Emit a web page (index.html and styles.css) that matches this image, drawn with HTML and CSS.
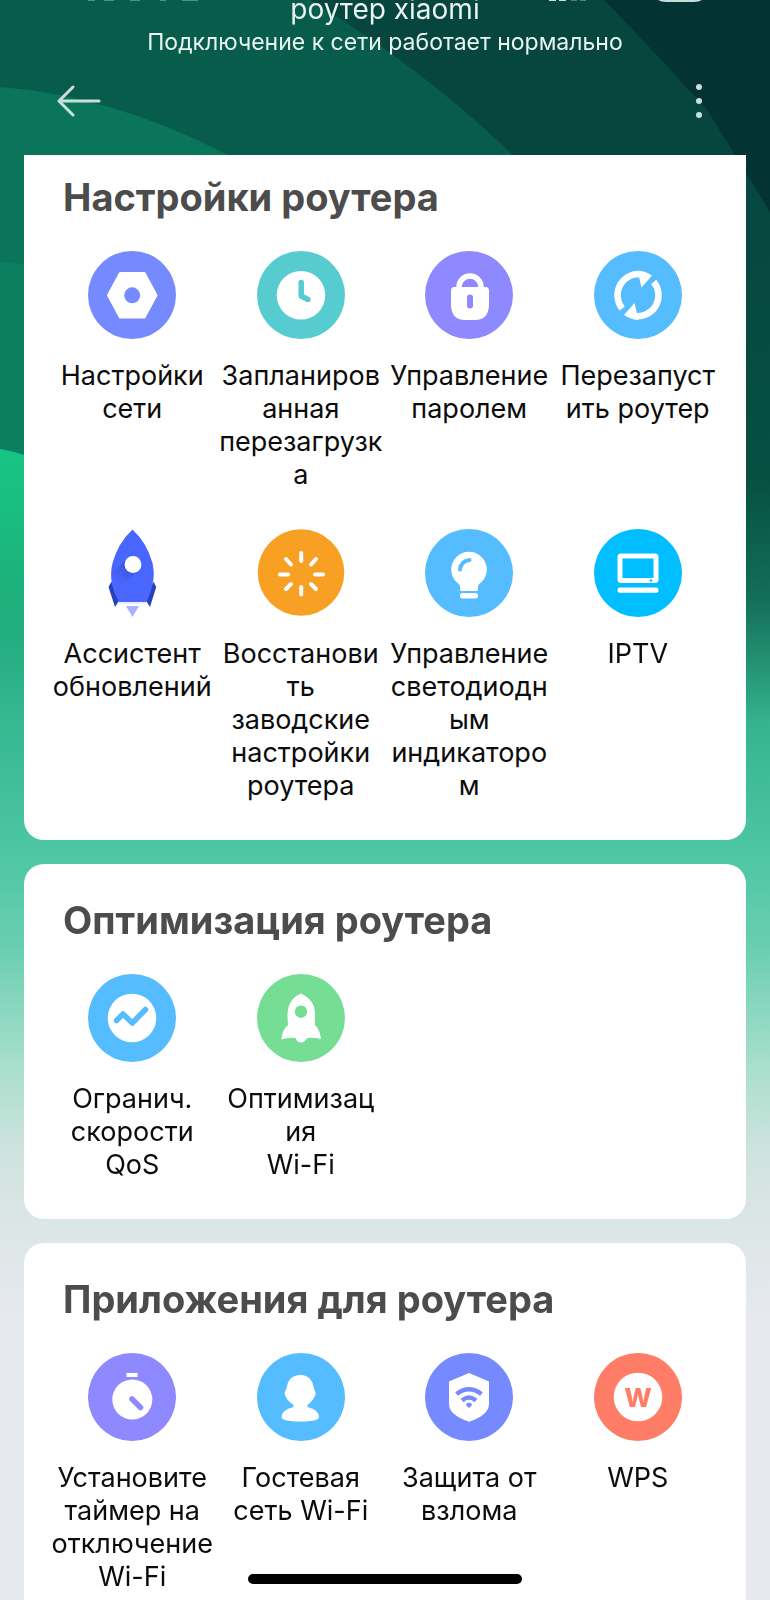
FILE: index.html
```html
<!DOCTYPE html>
<html lang="ru">
<head>
<meta charset="utf-8">
<meta name="viewport" content="width=device-width, initial-scale=1">
<title>роутер xiaomi</title>
<link rel="stylesheet" href="styles.css">
</head>
<body>
<svg class="backdrop" viewBox="0 0 770 1600" preserveAspectRatio="none" aria-hidden="true">
  <defs>
    <linearGradient id="leaf" gradientUnits="userSpaceOnUse" x1="0" y1="450" x2="0" y2="640">
      <stop offset="0" stop-color="#18c383"/><stop offset="0.3" stop-color="#18bf80"/><stop offset="1" stop-color="#12a56f"/>
    </linearGradient>
    <linearGradient id="band" gradientUnits="userSpaceOnUse" x1="0" y1="150" x2="0" y2="500">
      <stop offset="0" stop-color="#06463f"/><stop offset="1" stop-color="#065042"/>
    </linearGradient>
    <linearGradient id="fade" gradientUnits="userSpaceOnUse" x1="0" y1="480" x2="0" y2="1320">
      <stop offset="0" stop-color="#32b48e" stop-opacity="0"/>
      <stop offset="0.14" stop-color="#32b48e" stop-opacity="0.3"/>
      <stop offset="0.29" stop-color="#38b993" stop-opacity="0.95"/>
      <stop offset="0.44" stop-color="#4cc6a3"/>
      <stop offset="0.56" stop-color="#6bcfb1"/>
      <stop offset="0.7" stop-color="#a9dfcd"/>
      <stop offset="0.8" stop-color="#cfe3de"/>
      <stop offset="0.9" stop-color="#dde6e7"/>
      <stop offset="1" stop-color="#e6e9ee"/>
    </linearGradient>
  </defs>
  <rect width="770" height="1600" fill="#033433"/>
  <path fill="url(#band)" d="M0 0H604Q653 50 707 110Q735 155 770 212V1600H0Z"/>
  <path fill="#085c4b" d="M0 0H310Q420 66 513 155Q600 250 640 400V800H0Z"/>
  <path fill="#0a755a" d="M0 87Q112 95 228 155Q330 220 380 330V800H0Z"/>
  <path fill="#0c7f60" d="M0 262L24 264L200 300V800H0Z"/>
  <path fill="url(#leaf)" d="M0 449Q12 451 24 455L300 560V900H0Z"/>
  <rect y="480" width="770" height="1120" fill="url(#fade)"/>
  <g fill="#c9dcd8">
    <path d="M658 0H702Q699 2 694 2H666Q661 2 658 0Z"/>
    <path d="M549 0H556V1H549ZM559 0H566V1H559Z"/>
    <path opacity=".4" d="M571 0H577V1H571ZM580 0H586V1H580ZM88 0H95V1H88ZM104 0H114V1H104ZM130 0H140V1H130ZM160 0H166V1H160ZM182 0H198V1H182Z"/>
  </g>
</svg>

<div class="screen">
  <header class="header">
    <h1 class="title">роутер xiaomi</h1>
    <p class="status">Подключение к сети работает нормально</p>
    <nav class="toolbar">
      <button class="tool" type="button" aria-label="Назад">
        <svg width="44" height="32" viewBox="0 0 44 32" fill="none" stroke="#c9e0da" stroke-width="3" stroke-linecap="round" stroke-linejoin="round"><path d="M16 2L2 16L16 30M2 16H42"/></svg>
      </button>
      <button class="tool" type="button" aria-label="Меню">
        <svg width="8" height="36" viewBox="0 0 8 36" fill="#c9e0da"><circle cx="4" cy="4" r="3"/><circle cx="4" cy="18" r="3"/><circle cx="4" cy="32" r="3"/></svg>
      </button>
    </nav>
  </header>

  <main class="content">
    <section class="card card-scrolled">
      <h2 class="heading">Настройки роутера</h2>
      <div class="grid">
        <button class="item" type="button">
          <svg class="icon" viewBox="0 0 88 88"><circle cx="44" cy="44" r="44" fill="#768aff"/><path fill="#fff" stroke="#fff" stroke-width="2" stroke-linejoin="round" d="M20 44.300L32 22H56.500L68.500 44.300L56.500 66.600H32Z"/><circle cx="44.200" cy="44.300" r="8" fill="#768aff"/></svg>
          <span>Настройки<br>сети</span>
        </button>
        <button class="item" type="button">
          <svg class="icon" viewBox="0 0 88 88"><circle cx="44" cy="44" r="44" fill="#56cbd0"/><circle cx="44" cy="44.300" r="24.300" fill="#fff"/><path fill="none" stroke="#56cbd0" stroke-width="5.500" stroke-linecap="round" stroke-linejoin="round" d="M44.200 31.500V45L51 48.500"/></svg>
          <span>Запланиров<br>анная<br>перезагрузк<br>а</span>
        </button>
        <button class="item" type="button">
          <svg class="icon" viewBox="0 0 88 88"><circle cx="44" cy="44" r="44" fill="#8e89ff"/><path fill="none" stroke="#fff" stroke-width="5.500" d="M34 38V36A11 11 0 0 1 56 36V38"/><path fill="#fff" d="M29 36H61Q64 36 64 40V53Q64 69 50 69H40Q26 69 26 53V40Q26 36 29 36Z"/><rect x="42" y="43.500" width="6" height="14" rx="3" fill="#8e89ff"/></svg>
          <span>Управление<br>паролем</span>
        </button>
        <button class="item" type="button">
          <svg class="icon" viewBox="0 0 88 88"><circle cx="44" cy="44" r="44" fill="#54bcff"/><g id="turn"><path fill="none" stroke="#fff" stroke-width="6.500" d="M28.300 57.500A21 21 0 0 1 48 23.400"/><path fill="#fff" d="M44 19.700Q51 19.700 58 24.500L47.500 36.500L45 26Z"/></g><use href="#turn" transform="rotate(180 44 44.200)"/></svg>
          <span>Перезапуст<br>ить роутер</span>
        </button>
        <button class="item" type="button">
          <svg class="icon" viewBox="0 0 88 88"><defs><linearGradient id="shade" x1="1" y1="0" x2="0.300" y2="0.900"><stop offset="0" stop-color="#2942b8"/><stop offset="1" stop-color="#4967ff"/></linearGradient></defs><path fill="#2940bd" d="M23.500 52.500L20.500 58L27 78L31.500 71ZM65.500 52.500L68.200 58L62 78L57.500 71Z"/><path fill="#4967ff" d="M44.500 .500Q59 14 64.500 34Q67 46 64.500 55Q62 66 58.500 73H31Q26 65 24 54Q22 44 24.500 34Q30 14 44.500 .500Z"/><path fill="url(#shade)" opacity=".75" d="M39 30L23.500 44Q23 50 24.500 57L34 57L51 41Z"/><circle cx="45" cy="35.500" r="8.400" fill="#fff"/><path fill="#a6b3ff" d="M38 77H51L44.500 88Z"/><path stroke="#d5dbff" stroke-width="1" d="M31 74H58"/></svg>
          <span>Ассистент<br>обновлений</span>
        </button>
        <button class="item" type="button">
          <svg class="icon" viewBox="0 0 88 88"><circle cx="44" cy="43.500" r="43.300" fill="#f8a024"/><path stroke="#fff" stroke-width="4" stroke-linecap="round" d="M44.200 24V32M44.200 58V65.500M23 45.500H31M58 45.500H66M29 30L34 35.500M59 30L54 35.500M29 60L34 55M59 60L54 55"/></svg>
          <span>Восстанови<br>ть<br>заводские<br>настройки<br>роутера</span>
        </button>
        <button class="item" type="button">
          <svg class="icon" viewBox="0 0 88 88"><circle cx="44" cy="44" r="44" fill="#54bcff"/><circle cx="44" cy="40.500" r="17.800" fill="#fff"/><path fill="#fff" d="M29 50Q35 54 35 58V60.500Q35 62 36.500 62H51.500Q53 62 53 60.500V58Q53 54 59 50Z"/><rect x="35" y="64" width="18" height="5.500" rx="2.500" fill="#fff"/><path fill="none" stroke="#54bcff" stroke-width="4" stroke-linecap="round" d="M35 40.500Q36 32 44.500 31"/></svg>
          <span>Управление<br>светодиодн<br>ым<br>индикаторо<br>м</span>
        </button>
        <button class="item" type="button">
          <svg class="icon" viewBox="0 0 88 88"><circle cx="44" cy="44" r="44" fill="#00beff"/><rect x="23.500" y="24.500" width="41" height="29.500" rx="3.500" fill="#fff"/><rect x="28.500" y="29.500" width="31" height="19.500" fill="#00beff"/><circle cx="57" cy="51.500" r="1.300" fill="#00beff"/><rect x="23.500" y="58.500" width="41" height="5.300" rx="2.500" fill="#fff"/></svg>
          <span>IPTV</span>
        </button>
      </div>
    </section>

    <section class="card">
      <h2 class="heading">Оптимизация роутера</h2>
      <div class="grid">
        <button class="item" type="button">
          <svg class="icon" viewBox="0 0 88 88"><circle cx="44" cy="44" r="44" fill="#54bcff"/><circle cx="44" cy="44" r="24.300" fill="#fff"/><path fill="none" stroke="#54bcff" stroke-width="5.500" stroke-linecap="round" stroke-linejoin="round" d="M28.500 46.500L35 40L44.300 49L57.500 35.500"/></svg>
          <span>Огранич.<br>скорости<br>QoS</span>
        </button>
        <button class="item" type="button">
          <svg class="icon" viewBox="0 0 88 88"><circle cx="44" cy="44" r="44" fill="#75dd94"/><path fill="#fff" d="M44 19.500Q58 26 58 40V51Q63 56 64 65Q56 63 50 64Q48 68.500 44 68.500Q40 68.500 38.500 64Q32 63 24.300 65.500Q25 56 31 51Q30.500 46 30.500 40Q31 25 44 19.500Z"/><circle cx="44" cy="37.700" r="6.200" fill="#75dd94"/></svg>
          <span>Оптимизац<br>ия<br>Wi-Fi</span>
        </button>
      </div>
    </section>

    <section class="card">
      <h2 class="heading">Приложения для роутера</h2>
      <div class="grid">
        <button class="item" type="button">
          <svg class="icon" viewBox="0 0 88 88"><circle cx="44" cy="44" r="44" fill="#8e89ff"/><rect x="38.500" y="20" width="11" height="4" fill="#fff"/><circle cx="44.300" cy="46.500" r="20" fill="#fff"/><path stroke="#8e89ff" stroke-width="5.500" stroke-linecap="round" d="M44 46L52.500 54.500"/></svg>
          <span>Установите<br>таймер на<br>отключение<br>Wi-Fi</span>
        </button>
        <button class="item" type="button">
          <svg class="icon" viewBox="0 0 88 88"><circle cx="44" cy="44" r="44" fill="#54bcff"/><path fill="#fff" d="M43.500 22Q55 22 57 36Q59.500 39 58 43Q55 49 50.500 52V54Q62 57 62 64Q62 68.500 43.500 68.500Q24.500 68.500 24.500 64Q24.500 57 36.500 54V52Q31 49 28.500 43Q26.500 39 29.500 36Q31 22 43.500 22Z"/></svg>
          <span>Гостевая<br>сеть Wi-Fi</span>
        </button>
        <button class="item" type="button">
          <svg class="icon" viewBox="0 0 88 88"><circle cx="44" cy="44" r="44" fill="#768aff"/><path fill="#fff" d="M44 20L64 28.500V51Q64 62 44 68.800Q24 62 24 51V28.500Z"/><path fill="none" stroke="#768aff" stroke-width="4.500" d="M31.500 41Q44 31.500 56.500 41M37 47.500Q44 41.500 51 47.500"/><path fill="#768aff" d="M41 51Q44 48.500 47 51Q47 53 44 55Q41 53 41 51Z"/></svg>
          <span>Защита от<br>взлома</span>
        </button>
        <button class="item" type="button">
          <svg class="icon" viewBox="0 0 88 88"><circle cx="44" cy="44" r="44" fill="#ff7d66"/><circle cx="44" cy="44" r="24.300" fill="#fff"/><text class="badge-letter" x="44" y="54" text-anchor="middle">W</text></svg>
          <span>WPS</span>
        </button>
      </div>
    </section>
  </main>
</div>
<div class="home-indicator"></div>
</body>
</html>
```

FILE: styles.css
```css
* {
  box-sizing: border-box;
}

body {
  margin: 0;
  font-family: Inter, "Liberation Sans", sans-serif;
  color: #0c0c0c;
  background: #e6e9ee;
}

.backdrop {
  position: fixed;
  inset: 0;
  width: 100%;
  height: 100%;
}

.screen {
  position: relative;
  display: flex;
  flex-direction: column;
  height: 100vh;
  overflow: hidden;
}

.header {
  flex: none;
  padding-bottom: 29px;
  text-align: center;
  color: #e9f3f0;
}

.title {
  margin: 0 0 10px;
  font-size: 28px;
  line-height: 18px;
  font-weight: 400;
}

.status {
  margin: 0;
  font-size: 23px;
  line-height: 28px;
}

.toolbar {
  display: flex;
  justify-content: space-between;
  align-items: center;
  margin-top: 20px;
  padding: 0 67px 0 57px;
}

.tool {
  display: flex;
  align-items: center;
  height: 50px;
  padding: 0;
  border: 0;
  background: none;
}

.content {
  flex: 1;
  min-height: 0;
  display: flex;
  flex-direction: column;
  gap: 24px;
  padding: 0 24px;
  overflow-y: auto;
  scrollbar-width: none;
}

.card {
  flex: none;
  padding: 33px 24px 38px;
  border-radius: 20px;
  background: #fff;
}

.card-scrolled {
  padding-top: 19px;
  border-top-left-radius: 0;
  border-top-right-radius: 0;
}

.heading {
  margin: 0 0 31px;
  padding-left: 15px;
  font-size: 38px;
  line-height: 46px;
  font-weight: 700;
  color: #4c4c4c;
}

.grid {
  display: grid;
  grid-template-columns: repeat(4, 1fr);
  row-gap: 38px;
}

.item {
  display: flex;
  flex-direction: column;
  align-items: center;
  gap: 20px;
  padding: 0;
  border: 0;
  background: none;
  font: inherit;
  font-size: 27px;
  line-height: 33px;
  color: inherit;
  text-align: center;
}

.icon {
  display: block;
  width: 88px;
  height: 88px;
}

.badge-letter {
  font-size: 26px;
  font-weight: 800;
  fill: #ff7d66;
}

.home-indicator {
  position: fixed;
  left: 50%;
  bottom: 16px;
  width: 274px;
  height: 10px;
  border-radius: 5px;
  background: #000;
  transform: translateX(-50%);
}
```
